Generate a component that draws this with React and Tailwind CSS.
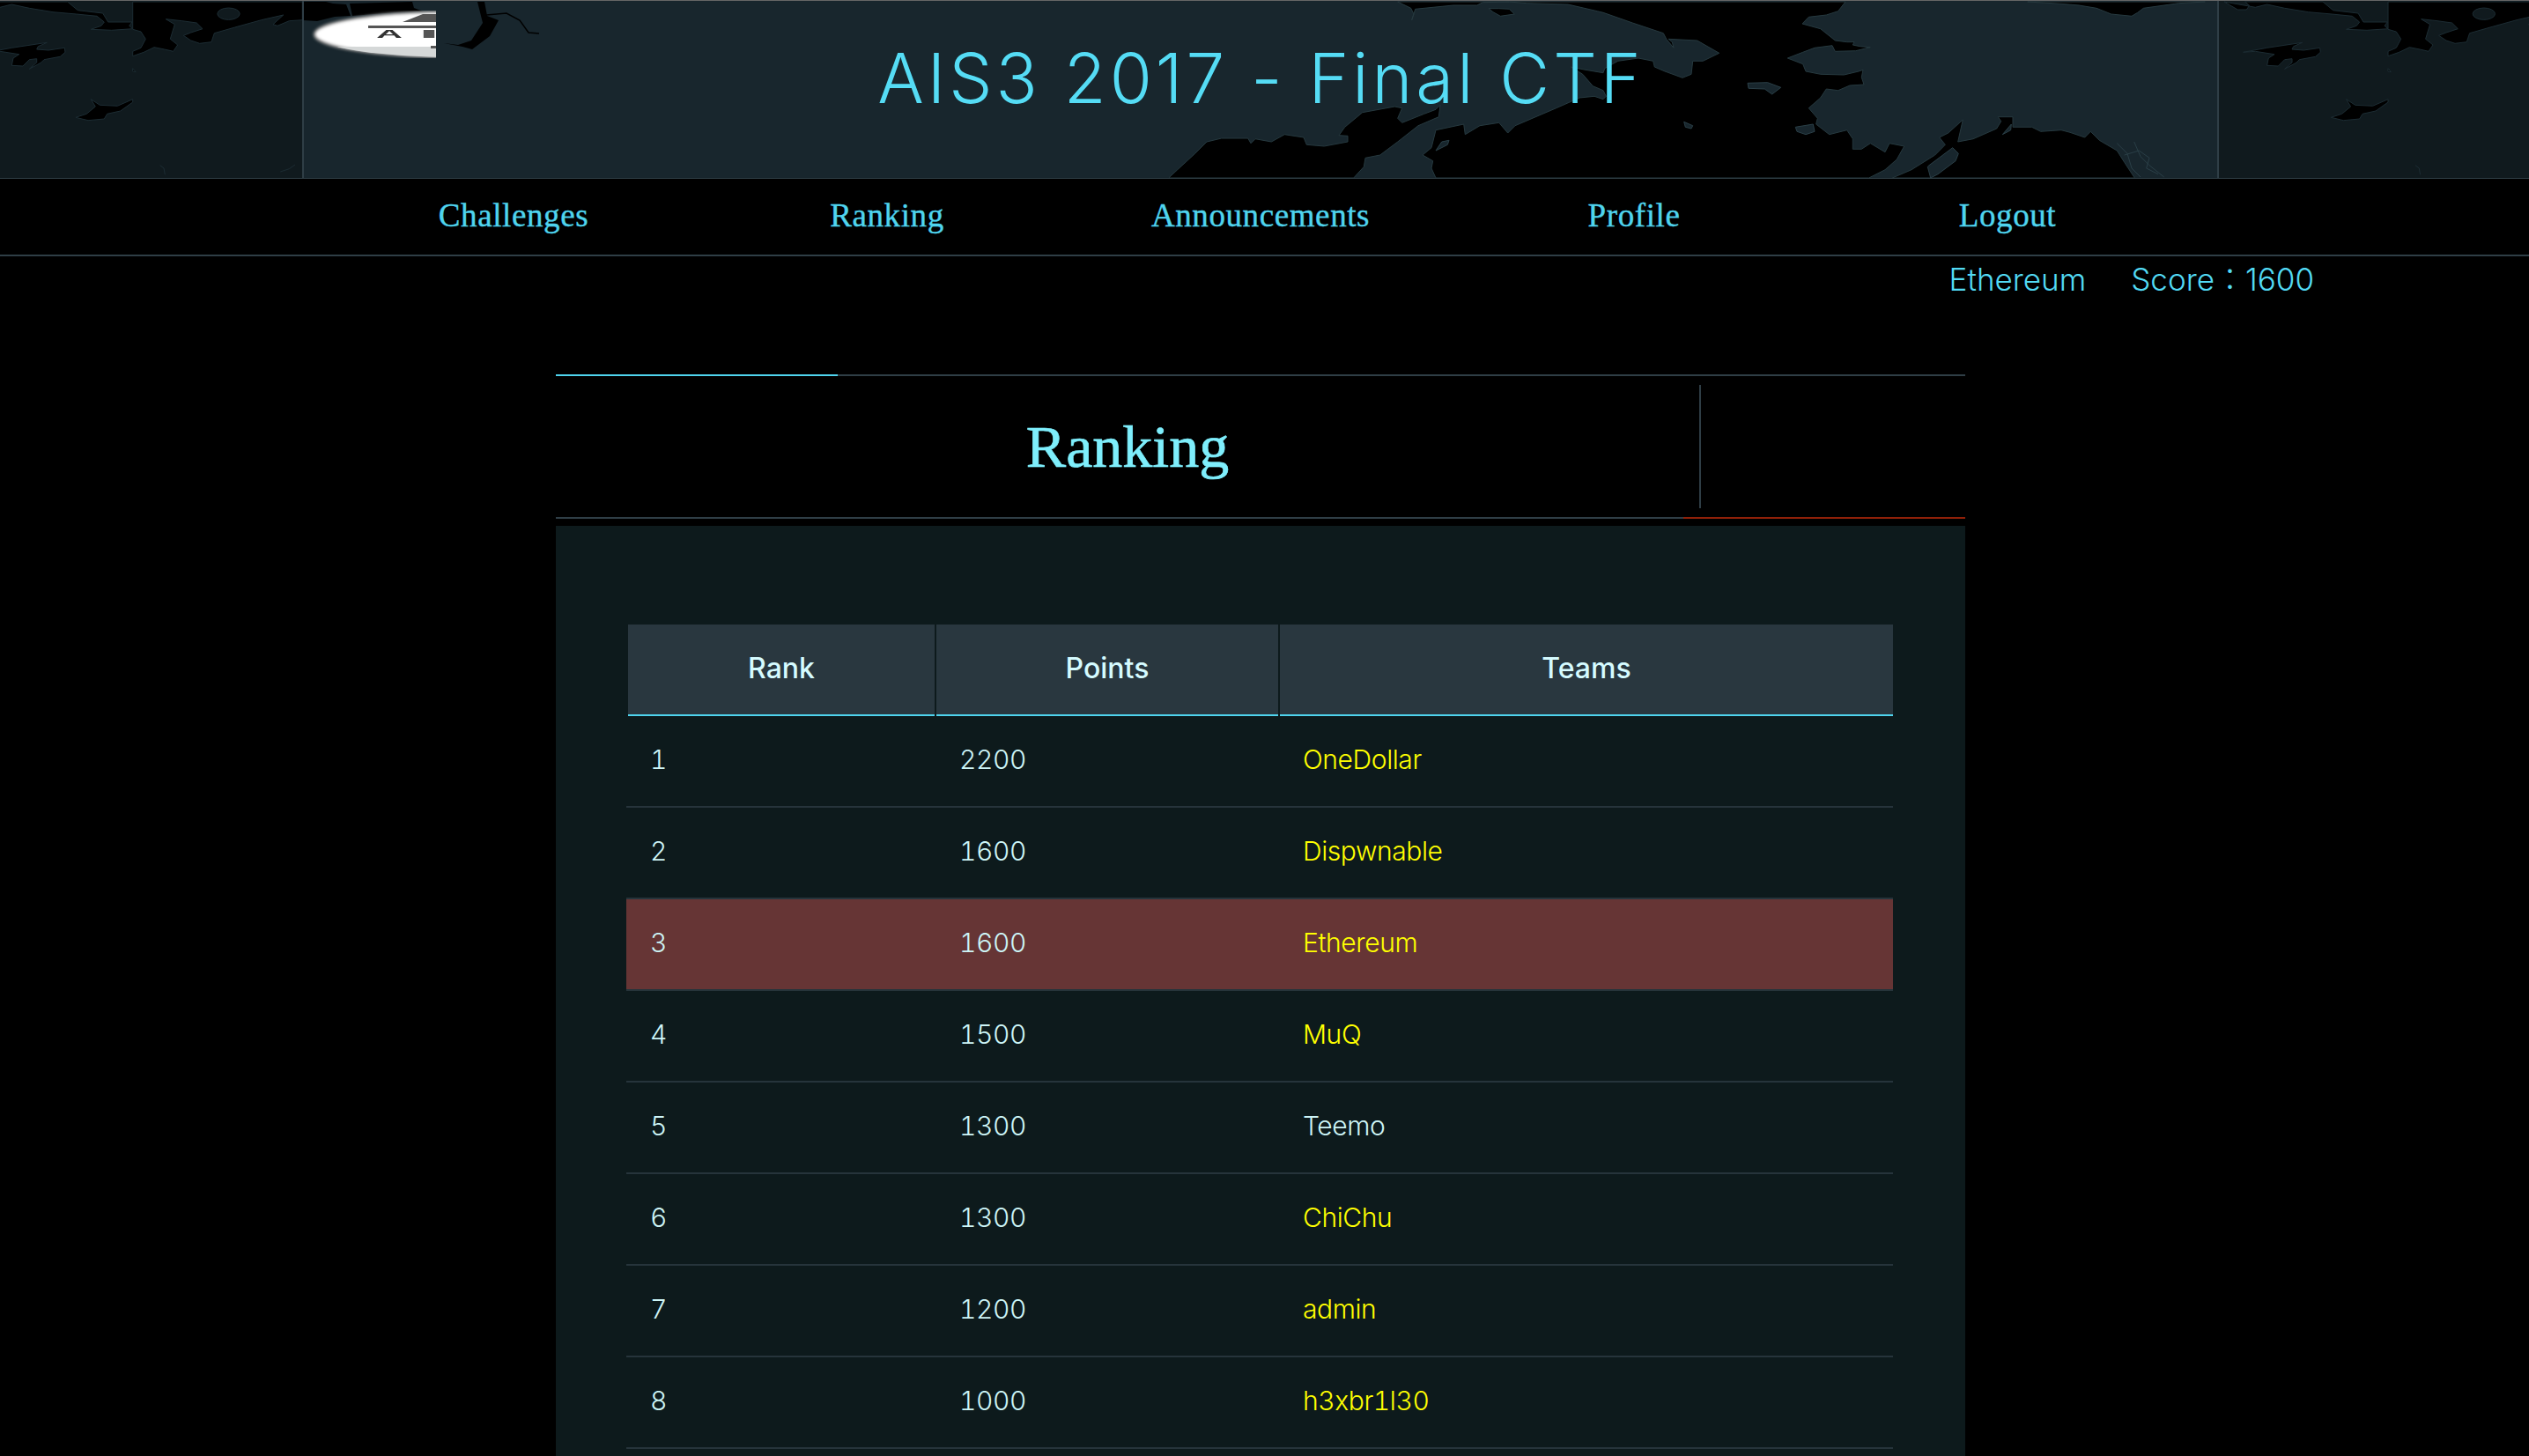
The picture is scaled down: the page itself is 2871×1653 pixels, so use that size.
const Z8 = 0, Z9 = 1300, Z10 = 1820, Z11 = 2340;
const z = (ox, arr) => arr.map(([x, y]) => `${(ox + x / 3).toFixed(1)},${(y / 3).toFixed(1)}`).join(" ");
const join = (...parts) => parts.join(" ");

const bering = join(
  z(Z9, [[1240,3],[1300,8],[1440,12],[1540,35]]),
  z(Z10, [[0,40],[100,75],[205,110],[215,130],[240,160],[235,140],[222,130],[320,135],[395,178],[340,205],[305,205],[300,250],[270,262],[210,240],[175,225],[170,205],[120,195],[50,205],[5,230]]),
  z(Z9, [[1560,245],[1500,235],[1450,225],[1490,250],[1525,290],[1560,305]]),
  z(Z10, [[10,325],[0,335]]),
  z(Z9, [[1530,325],[1480,330],[1400,365],[1260,425],[1235,450],[1205,415],[1140,425],[1090,455],[1085,420],[990,440],[975,500],[945,525],[980,545],[975,570],[990,603]]),
  z(Z10, [[905,603],[960,575],[1000,540],[1025,495],[975,485],[960,515],[910,485],[880,505],[850,505],[850,470],[830,440],[770,455],[725,420],[730,400],[700,365],[740,330],[760,300],[800,305],[840,288],[888,285],[880,260],[885,235],[870,240],[820,252],[740,250],[690,240],[680,215],[628,195],[680,175],[720,160],[780,152],[790,172],[860,170],[910,158],[875,155],[850,150],[855,140],[830,140],[790,135],[740,95],[678,78],[700,55],[760,48],[800,35],[825,3]])
);
const okhotsk = z(Z9, [[80,603],[110,575],[170,520],[210,480],[260,468],[350,468],[360,485],[375,470],[430,480],[475,455],[540,465],[550,490],[610,495],[690,480],[690,460],[660,458],[680,430],[740,380],[850,360],[875,365],[860,400],[875,415],[950,385],[990,370],[1005,355],[1000,395],[930,425],[860,480],[800,525],[750,535],[745,565],[710,603]]);
const arcticInlet = z(Z9, [[860,3],[905,25],[915,45],[908,65],[920,28],[1050,15],[1130,15],[1150,5],[1240,3]]);
const inlet2 = z(Z9, [[1170,26],[1205,26],[1240,28],[1258,45],[1210,52],[1185,38]]);
const gulf = join(
  z(Z10, [[985,603],[1050,575],[1130,525],[1165,490],[1145,465],[1175,450],[1225,405],[1208,480],[1260,470],[1340,435],[1355,410],[1345,395],[1395,395],[1395,430],[1460,430],[1490,445],[1560,440]]),
  z(Z11, [[30,448],[80,465],[100,445],[130,475],[190,510],[215,550],[250,603]])
);
const beaufort = join(z(Z10, [[1445,3],[1560,10]]), z(Z11, [[60,15],[120,25],[170,45],[240,52],[260,40],[280,25],[400,8],[490,3]]));
const islands = [
  z(Z9, [[990,510],[1010,480],[1035,475],[1030,490]]),
  z(Z10, [[1110,560],[1190,500],[1210,520],[1200,545],[1140,590],[1115,603],[1105,565]]),
  z(Z10, [[655,430],[715,420],[720,445],[690,455],[660,445]]),
  z(Z10, [[492,280],[560,278],[605,295],[575,318],[550,300],[495,298]]),
  z(Z10, [[275,412],[305,425],[300,435],[280,430]]),
];
const kenaiIsl = z(Z10, [[1360,455],[1390,420],[1388,440]]);

// shapes of the repeated dark map tile (coordinates of the left tile)
const tileSeas = [
  z(0, [[-106,3],[-60,30],[-30,30],[-20,16],[-35,3],[230,3],[265,32],[350,42],[368,72],[450,72],[440,85],[452,95],[380,100],[310,97],[345,85],[355,72],[330,52],[260,45],[180,38],[100,25],[40,12],[0,22]]),
  z(0, [[452,3],[1030,3],[1030,65],[985,68],[945,85],[930,80],[965,48],[890,65],[800,90],[730,110],[720,140],[680,145],[650,135],[625,118],[650,108],[690,95],[670,75],[620,68],[565,62],[595,80],[580,130],[605,150],[590,172],[560,165],[525,158],[490,175],[452,188],[452,172],[480,160],[496,130],[480,105],[452,97]]),
  z(0, [[452,230],[462,242],[452,240]]),
  z(0, [[-41,175],[40,160],[160,142],[130,155],[125,165],[165,168],[220,160],[222,175],[205,190],[150,200],[140,210],[100,232],[125,210],[125,197],[100,200],[78,222],[40,220],[45,195],[65,182],[0,172]]),
  z(0, [[310,335],[340,355],[400,358],[452,335],[452,345],[410,375],[365,385],[355,402],[300,407],[258,397],[295,385],[325,360]]),
];

function TileShapes() {
  return (
    <g>
      {tileSeas.map((p, i) => (
        <polygon key={i} points={p} fill="#000" stroke="#1c2c33" strokeWidth="1" strokeLinejoin="round" />
      ))}
      <ellipse cx="259.5" cy="14.7" rx="12.7" ry="6.7" fill="#101a1e" stroke="#1c2c33" />
      <polyline points={z(0, [[545,560],[558,570],[562,592]])} fill="none" stroke="#1c2c33" />
      <polyline points={z(0, [[955,582],[985,572],[1005,558]])} fill="none" stroke="#1c2c33" />
    </g>
  );
}

function HeaderMap() {
  const coast = { fill: "#000", stroke: "#26393f", strokeWidth: 1, strokeLinejoin: "round" };
  return (
    <svg className="absolute inset-0 w-full h-full" viewBox="0 0 2871 201" preserveAspectRatio="none" width="2871" height="201" style={{ height: 201 }}>
      <defs>
        <clipPath id="leftTile"><rect x="0" y="0" width="344" height="201" /></clipPath>
        <clipPath id="rightTile"><rect x="2517" y="0" width="354" height="201" /></clipPath>
        <clipPath id="logoBox"><rect x="340" y="11" width="155" height="54" /></clipPath>
        <clipPath id="logoLow"><rect x="340" y="52" width="155" height="14" /></clipPath>
        <filter id="soft" x="-10%" y="-20%" width="120%" height="140%"><feGaussianBlur stdDeviation="1.6" /></filter>
        <filter id="softer" x="-10%" y="-40%" width="120%" height="180%"><feGaussianBlur stdDeviation="0.7" /></filter>
      </defs>
      <rect x="344" y="0" width="2174" height="201" fill="#18262d" />
      <rect x="0" y="0" width="344" height="201" fill="#101a1e" />
      <rect x="2517" y="0" width="354" height="201" fill="#101a1e" />
      <g clipPath="url(#leftTile)"><TileShapes /></g>
      <g clipPath="url(#rightTile)"><g transform="translate(2560.3 0)"><TileShapes /></g></g>

      <polygon points={bering} {...coast} />
      <polygon points={okhotsk} {...coast} />
      <polygon points={arcticInlet} {...coast} />
      <polygon points={inlet2} {...coast} />
      <polygon points={gulf} {...coast} />
      <polygon points={beaufort} {...coast} />
      {islands.map((p, i) => (
        <polygon key={i} points={p} fill="#18262d" stroke="#2a3f47" strokeWidth="1" strokeLinejoin="round" />
      ))}
      <polygon points={kenaiIsl} fill="#18262d" stroke="#2a3f47" />
      <polyline points={z(Z11, [[190,485],[225,520],[240,570],[270,600]])} fill="none" stroke="#2a3f47" />
      <polyline points={z(Z11, [[248,480],[270,530],[300,560],[350,600]])} fill="none" stroke="#2a3f47" />
      <polyline points={z(Z11, [[215,525],[265,510],[300,535],[290,570],[330,590]])} fill="none" stroke="#2a3f47" />
      <polygon points="344,1 370,1 378,3 393,4 398,17 380,18 360,23 344,22" fill="#000" />
      <polygon points="397,3 468,1 470,8 480,12 450,13 400,17" fill="#000" />
      <polygon points="542,1 550,1 553,17 566,22 556,40 536,55 525,52 504,48 520,50 535,45 548,25" fill="#000" />
      <polyline points="552,16 575,14 590,22 600,36 612,37" fill="none" stroke="#000" strokeWidth="1.5" />

      <g clipPath="url(#logoBox)">
        <ellipse cx="520" cy="38" rx="163" ry="26" fill="#fff" stroke="#8a8a8a" strokeWidth="3" filter="url(#soft)" />
        <g clipPath="url(#logoLow)">
          <ellipse cx="520" cy="38" rx="163" ry="26" fill="#d5d8d8" />
        </g>
        <g filter="url(#softer)">
          <polygon points="457,24 480,15 495,15 495,24" fill="#555" />
          <rect x="418" y="28" width="77" height="3" fill="#555" />
          <text x="427" y="42" fontSize="13" fontWeight="700" fontFamily="'Liberation Sans', sans-serif" fill="#333" textLength="30" lengthAdjust="spacingAndGlyphs">A</text>
          <text x="475" y="42" fontSize="13" fontWeight="700" fontFamily="'Liberation Sans', sans-serif" fill="#555" textLength="24" lengthAdjust="spacingAndGlyphs">I</text>
          <rect x="489" y="51" width="6" height="3" fill="#555" />
        </g>
      </g>
      <rect x="343" y="0" width="2" height="201" fill="#2f3e46" />
      <rect x="2517" y="0" width="2" height="201" fill="#2f3e46" />
    </svg>
  );
}

const rows = [
  [1, 2200, "OneDollar", true],
  [2, 1600, "Dispwnable", true],
  [3, 1600, "Ethereum", true],
  [4, 1500, "MuQ", true],
  [5, 1300, "Teemo", false],
  [6, 1300, "ChiChu", true],
  [7, 1200, "admin", true],
  [8, 1000, "h3xbr1l30", true],
];

export default function App() {
  return (
    <div className="h-[1653px] overflow-hidden bg-black font-['Inter','Noto_Sans_CJK_JP',sans-serif] font-light text-[#cdf5f7]">
      <header className="relative h-[203px] border-t border-t-[#666] border-b-2 border-b-[#2f3e46] flex justify-center">
        <HeaderMap />
        <h1 className="relative h-[200px] mr-[8px] pt-[43px] text-[78px] leading-[90px] tracking-[4px] text-[#55dcf5] font-light whitespace-nowrap">
          AIS3 2017 - Final CTF
        </h1>
      </header>

      <nav className="h-[88px] border-b-2 border-b-[#2f3e46]">
        <ul className="ml-[371px] w-[2120px] h-full grid grid-cols-5 font-['Liberation_Serif',serif] font-normal text-[37px] tracking-[0.6px] text-[#4fd4ee] [-webkit-text-stroke-width:0.4px]">
          {["Challenges", "Ranking", "Announcements", "Profile", "Logout"].map((t) => (
            <li key={t} className="flex items-center justify-center pb-[2px]">{t}</li>
          ))}
        </ul>
      </nav>

      <div className="h-[134px] flex justify-end pr-[244px] gap-[51px] pt-[1px] text-[35px] leading-[50px] text-[#52daf4] whitespace-nowrap">
        <span>Ethereum</span>
        <span>Score：1600</span>
      </div>

      <section className="ml-[631px] w-[1600px]">
        <div className="h-[2px] bg-[#2f3e46]">
          <div className="h-[2px] w-[320px] bg-[#4fd4ee]" />
        </div>
        <div className="h-[160px] py-[10px]">
          <h2 className="w-[1300px] h-[140px] border-r-2 border-r-[#2f3e46] flex items-center justify-center font-['Liberation_Serif',serif] font-normal text-[68px] text-[#7eeefc] [-webkit-text-stroke-width:0.7px]">
            Ranking
          </h2>
        </div>
        <div className="h-[2px] bg-[#2f3e46] flex justify-end">
          <div className="h-[2px] w-[320px] bg-[#8f2008]" />
        </div>

        <div className="mt-[8px] bg-[#0d1a1c] px-[82px] pt-[112px] h-[1056px]">
          <div className="grid grid-cols-[348px_388px_696px] gap-x-[2px] text-[32px] font-medium text-[#d5fbff]">
            {["Rank", "Points", "Teams"].map((h) => (
              <div key={h} className="h-[104px] pb-[3px] bg-[#29373f] border-b-2 border-b-[#4fd4ee] flex items-center justify-center">
                {h}
              </div>
            ))}
          </div>
          <div className="-ml-[2px] w-[1438px]">
            {rows.map(([rank, points, team, yellow]) => (
              <div
                key={rank}
                className={`h-[104px] pb-[3px] grid grid-cols-[352px_390px_1fr] items-center border-b-2 border-b-[#26343b] text-[30px] tabular-nums tracking-[-0.4px] ${rank === 3 ? "bg-[#663535]" : ""}`}
              >
                <div className="pl-[27px]">{rank}</div>
                <div className="pl-[26px]">{points}</div>
                <div className={`pl-[26px] ${yellow ? "text-[#ffff00]" : ""}`}>{team}</div>
              </div>
            ))}
          </div>
        </div>
      </section>
    </div>
  );
}
